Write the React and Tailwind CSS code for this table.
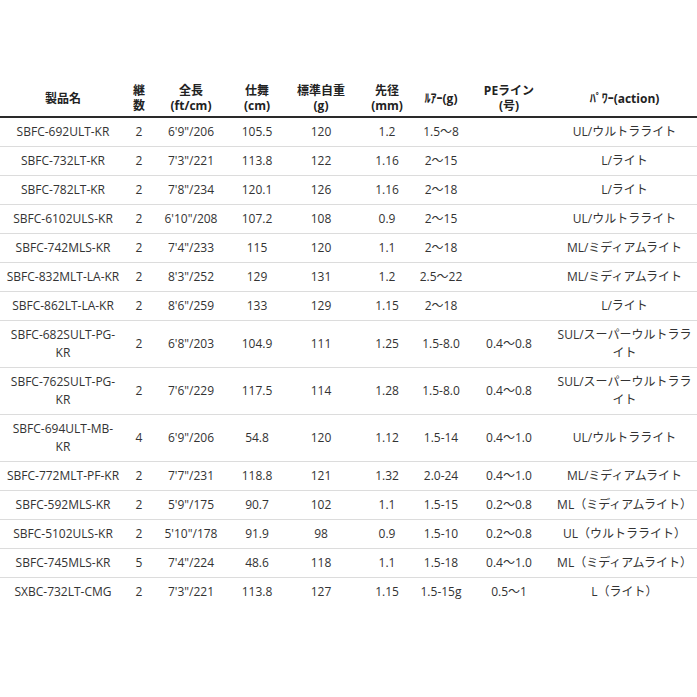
const rows = [
  ['SBFC-692ULT-KR', '2', '6\'9"/206', '105.5', '120', '1.2', '1.5～8', '', 'UL/ウルトラライト'],
  ['SBFC-732LT-KR', '2', '7\'3"/221', '113.8', '122', '1.16', '2～15', '', 'L/ライト'],
  ['SBFC-782LT-KR', '2', '7\'8"/234', '120.1', '126', '1.16', '2～18', '', 'L/ライト'],
  ['SBFC-6102ULS-KR', '2', '6\'10"/208', '107.2', '108', '0.9', '2～15', '', 'UL/ウルトラライト'],
  ['SBFC-742MLS-KR', '2', '7\'4"/233', '115', '120', '1.1', '2～18', '', 'ML/ミディアムライト'],
  ['SBFC-832MLT-LA-KR', '2', '8\'3"/252', '129', '131', '1.2', '2.5～22', '', 'ML/ミディアムライト'],
  ['SBFC-862LT-LA-KR', '2', '8\'6"/259', '133', '129', '1.15', '2～18', '', 'L/ライト'],
  ['SBFC-682SULT-PG-\nKR', '2', '6\'8"/203', '104.9', '111', '1.25', '1.5-8.0', '0.4～0.8', 'SUL/スーパーウルトララ\nイト'],
  ['SBFC-762SULT-PG-\nKR', '2', '7\'6"/229', '117.5', '114', '1.28', '1.5-8.0', '0.4～0.8', 'SUL/スーパーウルトララ\nイト'],
  ['SBFC-694ULT-MB-\nKR', '4', '6\'9"/206', '54.8', '120', '1.12', '1.5-14', '0.4～1.0', 'UL/ウルトラライト'],
  ['SBFC-772MLT-PF-KR', '2', '7\'7"/231', '118.8', '121', '1.32', '2.0-24', '0.4～1.0', 'ML/ミディアムライト'],
  ['SBFC-592MLS-KR', '2', '5\'9"/175', '90.7', '102', '1.1', '1.5-15', '0.2～0.8', 'ML（ミディアムライト）'],
  ['SBFC-5102ULS-KR', '2', '5\'10"/178', '91.9', '98', '0.9', '1.5-10', '0.2～0.8', 'UL（ウルトラライト）'],
  ['SBFC-745MLS-KR', '5', '7\'4"/224', '48.6', '118', '1.1', '1.5-18', '0.4～1.0', 'ML（ミディアムライト）'],
  ['SXBC-732LT-CMG', '2', '7\'3"/221', '113.8', '127', '1.15', '1.5-15g', '0.5～1', 'L（ライト）'],
];

const headers = [
  '製品名',
  '継\n数',
  '全長\n(ft/cm)',
  '仕舞\n(cm)',
  '標準自重\n(g)',
  '先径\n(mm)',
  'ﾙｱｰ(g)',
  'PEライン\n(号)',
  'ﾊﾟﾜｰ(action)',
];

export default function App() {
  return (
    <div
      className="w-[697px] h-[697px] bg-white pt-[80px]"
      style={{ fontFamily: '"Open Sans", "Noto Sans CJK JP", sans-serif' }}
    >
      <table className="w-[697px] table-fixed border-collapse text-[12px] text-[#333]">
        <colgroup>
          <col className="w-[126px]" />
          <col className="w-[26px]" />
          <col className="w-[78px]" />
          <col className="w-[54px]" />
          <col className="w-[74px]" />
          <col className="w-[58px]" />
          <col className="w-[50px]" />
          <col className="w-[86px]" />
          <col className="w-[145px]" />
        </colgroup>
        <thead>
          <tr className="border-b-2 border-[#2a2a2a]">
            {headers.map((h) => (
              <th
                key={h}
                className="py-[3px] px-0 text-center align-middle font-bold leading-[15px] text-[#222] whitespace-pre-line"
              >
                {h}
              </th>
            ))}
          </tr>
        </thead>
        <tbody>
          {rows.map((r, i) => (
            <tr
              key={r[0]}
              className={i === rows.length - 1 ? '' : 'border-b border-[#dcdcdc]'}
            >
              {r.map((c, j) => (
                <td
                  key={j}
                  className="py-[5px] px-0 text-center align-middle leading-[18px] whitespace-pre-line"
                >
                  {c}
                </td>
              ))}
            </tr>
          ))}
        </tbody>
      </table>
    </div>
  );
}
